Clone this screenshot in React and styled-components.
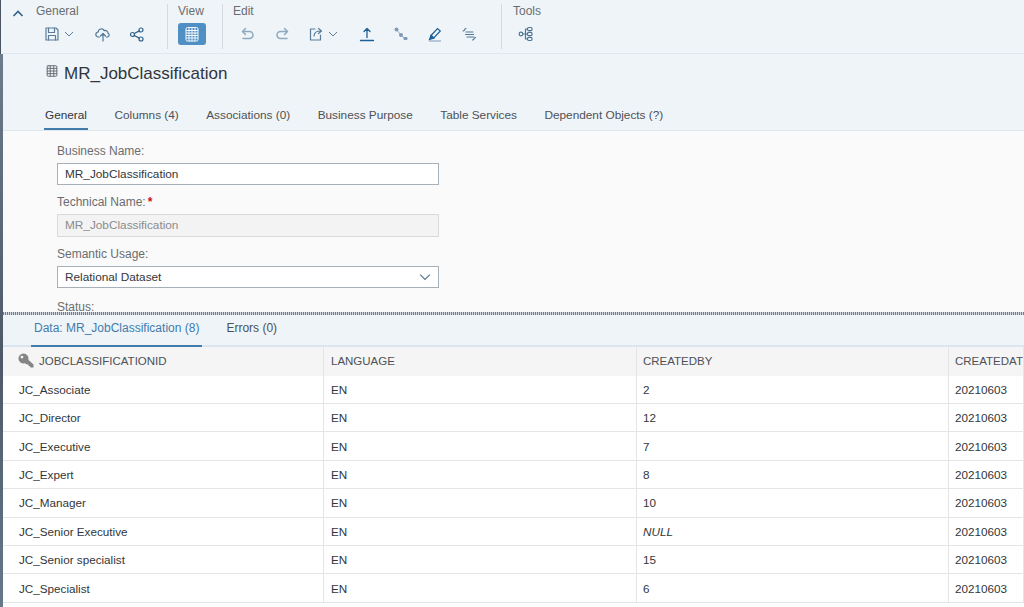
import React from 'react'
import styled, { createGlobalStyle } from 'styled-components'

const GlobalStyle = createGlobalStyle`
html, body {
  margin: 0;
  padding: 0;
  background: #fff;
  font-family: "Liberation Sans", Arial, sans-serif;
  overflow: hidden;
}
`

const Page = styled.div`
width: 1024px;
height: 607px;
overflow: hidden;
display: flex;
background: #fff;
`
const Edge = styled.div`
width: 3px;
flex: none;
display: flex;
flex-direction: column;
`
const EdgeTop = styled.div`
height: 54px;
background: #eff4f9;
border-left: 1px solid #4a5560;
box-sizing: border-box;
`
const EdgeBottom = styled.div`
flex: 1;
background: linear-gradient(#6c7c8c, #4d5966 55%, #66788a);
`
const Main = styled.div`
flex: 1;
min-width: 0;
display: flex;
flex-direction: column;
`
const Toolbar = styled.div`
height: 53px;
flex: none;
display: flex;
background: #eff4f9;
border-bottom: 1px solid #dfe7ef;
box-sizing: content-box;
padding-left: 9px;
`
const Collapse = styled.div`
width: 24px;
padding-top: 6px;
color: #346187;
`
const Group = styled.div`
display: flex;
flex-direction: column;
height: 45px;
margin-top: 4px;
padding-right: ${p => p.$pr}px;
border-right: ${p => (p.$last ? 'none' : '1px solid #d3dae1')};
margin-right: ${p => p.$mr || 10}px;
`
const GroupTitle = styled.div`
font-size: 12px;
line-height: 14px;
color: #6a6d70;
`
const Tools = styled.div`
display: flex;
align-items: center;
height: 24px;
margin-top: 4px;
padding-left: ${p => p.$indent || 0}px;
gap: 18px;
`
const ToolIcon = styled.span`
display: inline-flex;
align-items: center;
gap: 4px;
padding-right: ${p => (p.$caret ? 3 : 0)}px;
color: ${p => p.$color || '#346187'};
`
const ActiveTool = styled.span`
width: 28px;
height: 22px;
border-radius: 3px;
background: #4f8fc4;
display: flex;
align-items: center;
justify-content: center;
color: #f2f7fb;
`
const Header = styled.div`
height: 76px;
flex: none;
background: #eff4f9;
display: flex;
flex-direction: column;
padding-left: 42px;
`
const TitleRow = styled.div`
display: flex;
align-items: center;
gap: 5px;
height: 26px;
margin-top: 7px;
color: #32363a;
font-size: 17px;
`
const TitleIcon = styled.span`
display: inline-flex;
margin-top: -6px;
color: #5a6168;
`
const TabRow = styled.div`
display: flex;
gap: 25.5px;
margin-top: 14px;
`
const Tab = styled.div`
height: 29px;
line-height: 29px;
box-sizing: border-box;
font-size: 11.8px;
color: ${p => (p.$active ? '#32363a' : '#4d5155')};
padding: 0 1px;
margin-left: ${p => (p.$active ? -1 : 0)}px;
border-bottom: 2px solid ${p => (p.$active ? '#427cac' : 'transparent')};
`
const Form = styled.div`
height: 182px;
flex: none;
overflow: hidden;
background: #fafafa;
border-top: 1px solid #dfe7ef;
box-sizing: border-box;
padding: 13px 0 0 54px;
display: flex;
flex-direction: column;
`
const FieldLabel = styled.div`
font-size: 12px;
line-height: 14px;
color: #6a6d70;
margin-bottom: 5px;
flex: none;
`
const Star = styled.span`
color: #c81414;
font-weight: bold;
margin-left: 2px;
`
const Field = styled.div`
width: 382px;
height: ${p => (p.$disabled ? 23 : 22)}px;
flex: none;
box-sizing: border-box;
display: flex;
align-items: center;
justify-content: space-between;
padding: 0 7px;
margin-bottom: ${p => p.$mb || 9.5}px;
font-size: 11.8px;
background: ${p => (p.$disabled ? '#f3f3f3' : '#fff')};
border: 1px solid ${p => (p.$disabled ? '#d9d9d9' : '#a6b0b9')};
color: ${p => (p.$disabled ? '#8a8c8e' : '#32363a')};
`
const Splitter = styled.div`
height: 3px;
flex: none;
background: repeating-linear-gradient(90deg, #6f7b87 0 1px, #d5dce3 1px 2px);
`
const DataTabs = styled.div`
height: 30px;
flex: none;
display: flex;
gap: 21px;
padding-left: 28px;
background: #eff4f9;
border-bottom: 2px solid #d9e5f1;
`
const DataTab = styled.div`
height: 32px;
line-height: 27px;
box-sizing: border-box;
font-size: 12px;
padding: 0 3px;
color: ${p => (p.$active ? '#427cac' : '#4d5155')};
border-bottom: 2px solid ${p => (p.$active ? '#427cac' : 'transparent')};
`
const Grid = styled.div`
display: grid;
grid-template-columns: 321px 313px 312px 1fr;
grid-template-rows: 28.5px repeat(8, 28.43px);
background: #fff;
`
const HeadCell = styled.div`
background: #f5f5f5;
border-right: 1px solid #e5e5e5;
display: flex;
align-items: center;
gap: 5px;
padding-left: ${p => p.$pl || 6}px;
font-size: 11.5px;
color: #4d5155;
white-space: nowrap;
overflow: hidden;
`
const Cell = styled.div`
border-right: 1px solid #e5e5e5;
border-bottom: 1px solid #e5e5e5;
box-sizing: border-box;
display: flex;
align-items: center;
padding-left: ${p => p.$pl || 6}px;
font-size: 11.7px;
color: #32363a;
font-style: ${p => (p.$null ? 'italic' : 'normal')};
white-space: nowrap;
overflow: hidden;
`

const Svg = ({ w = 16, h = 16, children, sw = 1.2 }) => (
  <svg width={w} height={h} viewBox="0 0 16 16" fill="none" stroke="currentColor" strokeWidth={sw} strokeLinecap="round" strokeLinejoin="round">
    {children}
  </svg>
)

const Chevron = ({ w = 10 }) => (
  <svg width={w} height={w} viewBox="0 0 10 10" fill="none" stroke="currentColor" strokeWidth="1">
    <path d="M1 3l4 4 4-4" />
  </svg>
)

const TableIcon = ({ size = 16, sw = 1 }) => (
  <Svg w={size} h={size} sw={sw}>
    <rect x="2.5" y="2" width="11" height="12" rx="1" />
    <path d="M2.500 5h11M2.500 8h11M2.500 11h11M6 2v12M10 2v12" />
  </Svg>
)

const DenseTable = () => (
  <svg width="16" height="16" viewBox="0 0 16 16" fill="none" stroke="currentColor" strokeWidth="1">
    <path d="M3.500 1.500h9a1.500 1.500 0 0 1 1.500 1.500v11a1.500 1.500 0 0 1-1.500 1h-9a1.500 1.500 0 0 1-1.500-1V3a1.500 1.500 0 0 1 1.500-1.500z" />
    <path d="M2 4.500h12M2 7h12M2 9.500h12M2 12h12M5 1.500v14M8 1.500v14M11 1.500v14" />
  </svg>
)

const rows = [
  ['JC_Associate', '2'],
  ['JC_Director', '12'],
  ['JC_Executive', '7'],
  ['JC_Expert', '8'],
  ['JC_Manager', '10'],
  ['JC_Senior Executive', 'NULL'],
  ['JC_Senior specialist', '15'],
  ['JC_Specialist', '6'],
]

const App = () => {
  return (
    <Page>
      <GlobalStyle />
      <Edge>
        <EdgeTop />
        <EdgeBottom />
      </Edge>
      <Main>
        <Toolbar>
          <Collapse>
            <svg width="12" height="12" viewBox="0 0 12 12" fill="none" stroke="currentColor" strokeWidth="1.6">
              <path d="M1.500 8L6 3.500 10.500 8" />
            </svg>
          </Collapse>
          <Group $pr={22}>
            <GroupTitle>General</GroupTitle>
            <Tools $indent={8}>
              <ToolIcon $caret $color="#5c7d99">
                <Svg>
                  <path d="M2 2h10l2 2v10H2z" />
                  <path d="M4.500 2v4.500h6V2M4.500 14V9.500h7V14" />
                </Svg>
                <Chevron />
              </ToolIcon>
              <ToolIcon $color="#4f7696">
                <Svg>
                  <path d="M4.500 11H3.500a2.500 2.500 0 0 1-.3-5 3.200 3.200 0 0 1 6-1.400A2.800 2.800 0 0 1 13 7.200 2 2 0 0 1 12.500 11h-1" />
                  <path d="M8 15V7.500M5.500 10L8 7.500l2.500 2.500" />
                </Svg>
              </ToolIcon>
              <ToolIcon>
                <Svg>
                  <circle cx="3.500" cy="8.500" r="2" />
                  <circle cx="12" cy="4" r="2" />
                  <circle cx="12" cy="13" r="2" />
                  <path d="M5.300 7.500l5-2.600M5.300 9.500l5 2.600" />
                </Svg>
              </ToolIcon>
            </Tools>
          </Group>
          <Group $pr={16}>
            <GroupTitle>View</GroupTitle>
            <Tools>
              <ActiveTool><DenseTable /></ActiveTool>
            </Tools>
          </Group>
          <Group $pr={24} $mr={11}>
            <GroupTitle>Edit</GroupTitle>
            <Tools $indent={7}>
              <ToolIcon $color="#8fa9bf">
                <Svg sw={1.5}>
                  <path d="M5.500 2.500L2.500 5.500l3 3" />
                  <path d="M3 5.500h6.500a3.500 3.500 0 0 1 0 7H3" />
                </Svg>
              </ToolIcon>
              <ToolIcon $color="#8fa9bf">
                <Svg sw={1.5}>
                  <path d="M10.500 2.500l3 3-3 3" />
                  <path d="M13 5.500H6.500a3.500 3.500 0 0 0 0 7H13" />
                </Svg>
              </ToolIcon>
              <ToolIcon $caret $color="#5c7d99">
                <Svg>
                  <path d="M7 3H2.500v11h10V9" />
                  <path d="M6 10c.3-3 2.200-5 6-5M10.500 2.500L13.500 5l-3 2.500" />
                </Svg>
                <Chevron />
              </ToolIcon>
              <ToolIcon $color="#1d5f95">
                <Svg sw={1.3}>
                  <path d="M1.500 14.500h13M8 11.500V2.500M5 5.500l3-3 3 3" />
                </Svg>
              </ToolIcon>
              <ToolIcon $color="#7e9bb3">
                <svg width="16" height="16" viewBox="0 0 16 16" fill="currentColor">
                  <circle cx="3.500" cy="3.500" r="2" />
                  <circle cx="8" cy="9" r="2" />
                  <rect x="10.500" y="11" width="4" height="3" rx="1" />
                  <path d="M3.500 3.500L8 9l3.500 3.500" stroke="currentColor" strokeWidth=".8" fill="none" />
                </svg>
              </ToolIcon>
              <ToolIcon $color="#1d5f95">
                <svg width="16" height="16" viewBox="0 0 16 16" fill="none" stroke="currentColor" strokeWidth="1.200">
                  <path d="M4 9.500l6.500-7 2.800 2.500-6.500 7z" />
                  <path d="M4 9.500l2.800 2.500L2.500 13.500z" fill="currentColor" />
                  <path d="M2 15h12" stroke="#8fa9bf" />
                </svg>
              </ToolIcon>
              <ToolIcon $color="#4f7696">
                <Svg sw={1.100}>
                  <path d="M5 2.500c-1.800 0-1 2.300-3 2.500" />
                  <path d="M5 6h7M4.500 8.500h8M6 11h7" />
                  <path d="M11.500 14c1.800 0 1-2 3-2.500" />
                </Svg>
              </ToolIcon>
            </Tools>
          </Group>
          <Group $last $pr={0}>
            <GroupTitle>Tools</GroupTitle>
            <Tools $indent={5}>
              <ToolIcon $color="#4f7696">
                <Svg>
                  <circle cx="3" cy="8" r="1.800" />
                  <rect x="9.500" y="1.500" width="4.500" height="3.200" rx="1.200" />
                  <rect x="9.500" y="6.400" width="4.500" height="3.200" rx="1.200" />
                  <rect x="9.500" y="11.300" width="4.500" height="3.200" rx="1.200" />
                  <path d="M4.800 8h4.700M7.500 8V3h2M7.500 8v5h2" />
                </Svg>
              </ToolIcon>
            </Tools>
          </Group>
        </Toolbar>
        <Header>
          <TitleRow>
            <TitleIcon><TableIcon size={14} /></TitleIcon>
            MR_JobClassification
          </TitleRow>
          <TabRow>
            <Tab $active>General</Tab>
            <Tab>Columns (4)</Tab>
            <Tab>Associations (0)</Tab>
            <Tab>Business Purpose</Tab>
            <Tab>Table Services</Tab>
            <Tab>Dependent Objects (?)</Tab>
          </TabRow>
        </Header>
        <Form>
          <FieldLabel>Business Name:</FieldLabel>
          <Field>MR_JobClassification</Field>
          <FieldLabel>Technical Name:<Star>*</Star></FieldLabel>
          <Field $disabled $mb={10.5}>MR_JobClassification</Field>
          <FieldLabel>Semantic Usage:</FieldLabel>
          <Field $mb={12}>
            Relational Dataset
            <ToolIcon $color="#5b738b"><Chevron w={12} /></ToolIcon>
          </Field>
          <FieldLabel>Status:</FieldLabel>
        </Form>
        <Splitter />
        <DataTabs>
          <DataTab $active>Data: MR_JobClassification (8)</DataTab>
          <DataTab>Errors (0)</DataTab>
        </DataTabs>
        <Grid>
          <HeadCell $pl={15}>
            <svg width="16" height="16" viewBox="0 0 16 16" fill="#858585">
              <path fillRule="evenodd" d="M5.500 0.500a5 5 0 0 1 4.800 6.300l5.200 4.700v3h-3l-.8-1.500H10.500V11.500H9L6.900 10.300A5 5 0 1 1 5.500 .500zM4 2.700a1.400 1.400 0 1 0 0 2.800 1.400 1.400 0 0 0 0-2.800z" />
            </svg>
            JOBCLASSIFICATIONID
          </HeadCell>
          <HeadCell $pl={7}>LANGUAGE</HeadCell>
          <HeadCell>CREATEDBY</HeadCell>
          <HeadCell>CREATEDAT</HeadCell>
          {rows.map(([name, by]) => (
            <React.Fragment key={name}>
              <Cell $pl={16}>{name}</Cell>
              <Cell $pl={7}>EN</Cell>
              <Cell $null={by === 'NULL'}>{by}</Cell>
              <Cell>20210603</Cell>
            </React.Fragment>
          ))}
        </Grid>
      </Main>
    </Page>
  )
}

export default App
